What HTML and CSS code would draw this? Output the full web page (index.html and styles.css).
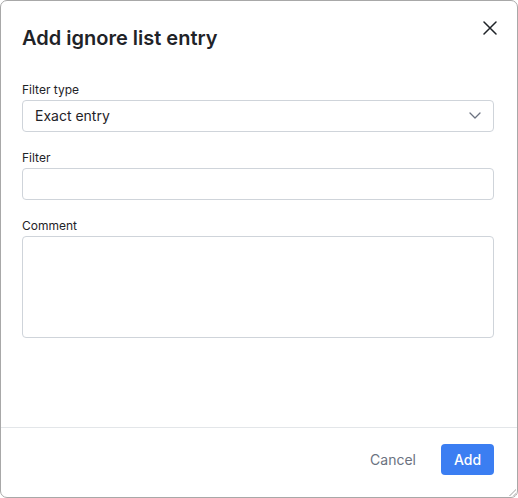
FILE: index.html
```html
<!DOCTYPE html>
<html>
    <head>
        <title>Add ignore list entry</title>
        <link rel="stylesheet" href="styles.css">
    </head>
    <body>
        <div class="dialog">
            <div class="header">
                <h2 class="title">Add ignore list entry</h2>
                <button class="close" aria-label="Close">
                    <svg width="14" height="14" viewBox="0 0 14 14">
                        <path d="M1 1L13 13M13 1L1 13" stroke="#1f2328" stroke-width="1.5" stroke-linecap="round"/>
                    </svg>
                </button>
            </div>
            <div class="body">
                <div class="field">
                    <label for="filterType">Filter type</label>
                    <div class="select" id="filterType">
                        <span>Exact entry</span>
                        <svg width="12" height="7" viewBox="0 0 12 7">
                            <path d="M1 1L6 6L11 1" fill="none" stroke="#6b7280" stroke-width="1.3" stroke-linecap="round" stroke-linejoin="round"/>
                        </svg>
                    </div>
                </div>
                <div class="field">
                    <label for="filter">Filter</label>
                    <input type="text" id="filter" class="input">
                </div>
                <div class="field">
                    <label for="comment">Comment</label>
                    <textarea id="comment" class="input textarea"></textarea>
                </div>
            </div>
            <div class="footer">
                <button class="btn cancel">Cancel</button>
                <button class="btn primary">Add</button>
            </div>
            <div class="grip"></div>
        </div>
    </body>
</html>
```
FILE: styles.css
```css
*{
    margin: 0;
    padding: 0;
    box-sizing: border-box;
}
body{
    font-family: Inter, "Noto Sans", sans-serif;
    color: #1f2328;
    background: #fff;
}
.dialog{
    position: relative;
    width: 518px;
    height: 498px;
    border: 1px solid #a8a8a8;
    border-radius: 7px;
    display: flex;
    flex-direction: column;
    background: #fff;
}
.header{
    display: flex;
    justify-content: space-between;
    align-items: flex-start;
    padding: 23px 20px 0 21px;
}
.title{
    font-size: 20px;
    line-height: 28px;
    font-weight: 600;
    color: #1f2328;
}
.close{
    border: none;
    background: none;
    width: 14px;
    height: 14px;
    margin-top: -3px;
    display: flex;
}
.body{
    flex: 1;
    padding: 30px 23px 0 21px;
    display: flex;
    flex-direction: column;
    gap: 18px;
}
.field{
    display: flex;
    flex-direction: column;
}
label{
    font-size: 12px;
    line-height: 16px;
    margin-bottom: 2px;
    color: #1f2328;
}
.select, .input{
    height: 32px;
    border: 1px solid #cfd4da;
    border-radius: 4px;
    font-family: inherit;
    font-size: 14px;
    color: #1f2328;
    background: #fff;
}
.select{
    display: flex;
    align-items: center;
    justify-content: space-between;
    padding: 0 12px 1px 12px;
}
.textarea{
    height: 102px;
    resize: none;
}
.footer{
    border-top: 1px solid #e3e6e9;
    display: flex;
    justify-content: flex-end;
    align-items: flex-start;
    padding: 16px 23px 0 21px;
    height: 70px;
}
.btn{
    font-family: inherit;
    font-size: 14px;
    height: 31px;
    border: none;
    border-radius: 4px;
    background: none;
}
.cancel{
    color: #6b7280;
    padding: 0 12px;
    margin-right: 13px;
}
.primary{
    background: #3b7ef2;
    color: #fff;
    font-weight: 500;
    padding: 0 13px;
    width: 53px;
}
.grip{
    position: absolute;
    right: 1px;
    bottom: 1px;
    width: 8px;
    height: 8px;
    background: linear-gradient(135deg, transparent 55%, #d0d0d0 55%, #d0d0d0 65%, transparent 65%, transparent 80%, #d0d0d0 80%);
}
```
